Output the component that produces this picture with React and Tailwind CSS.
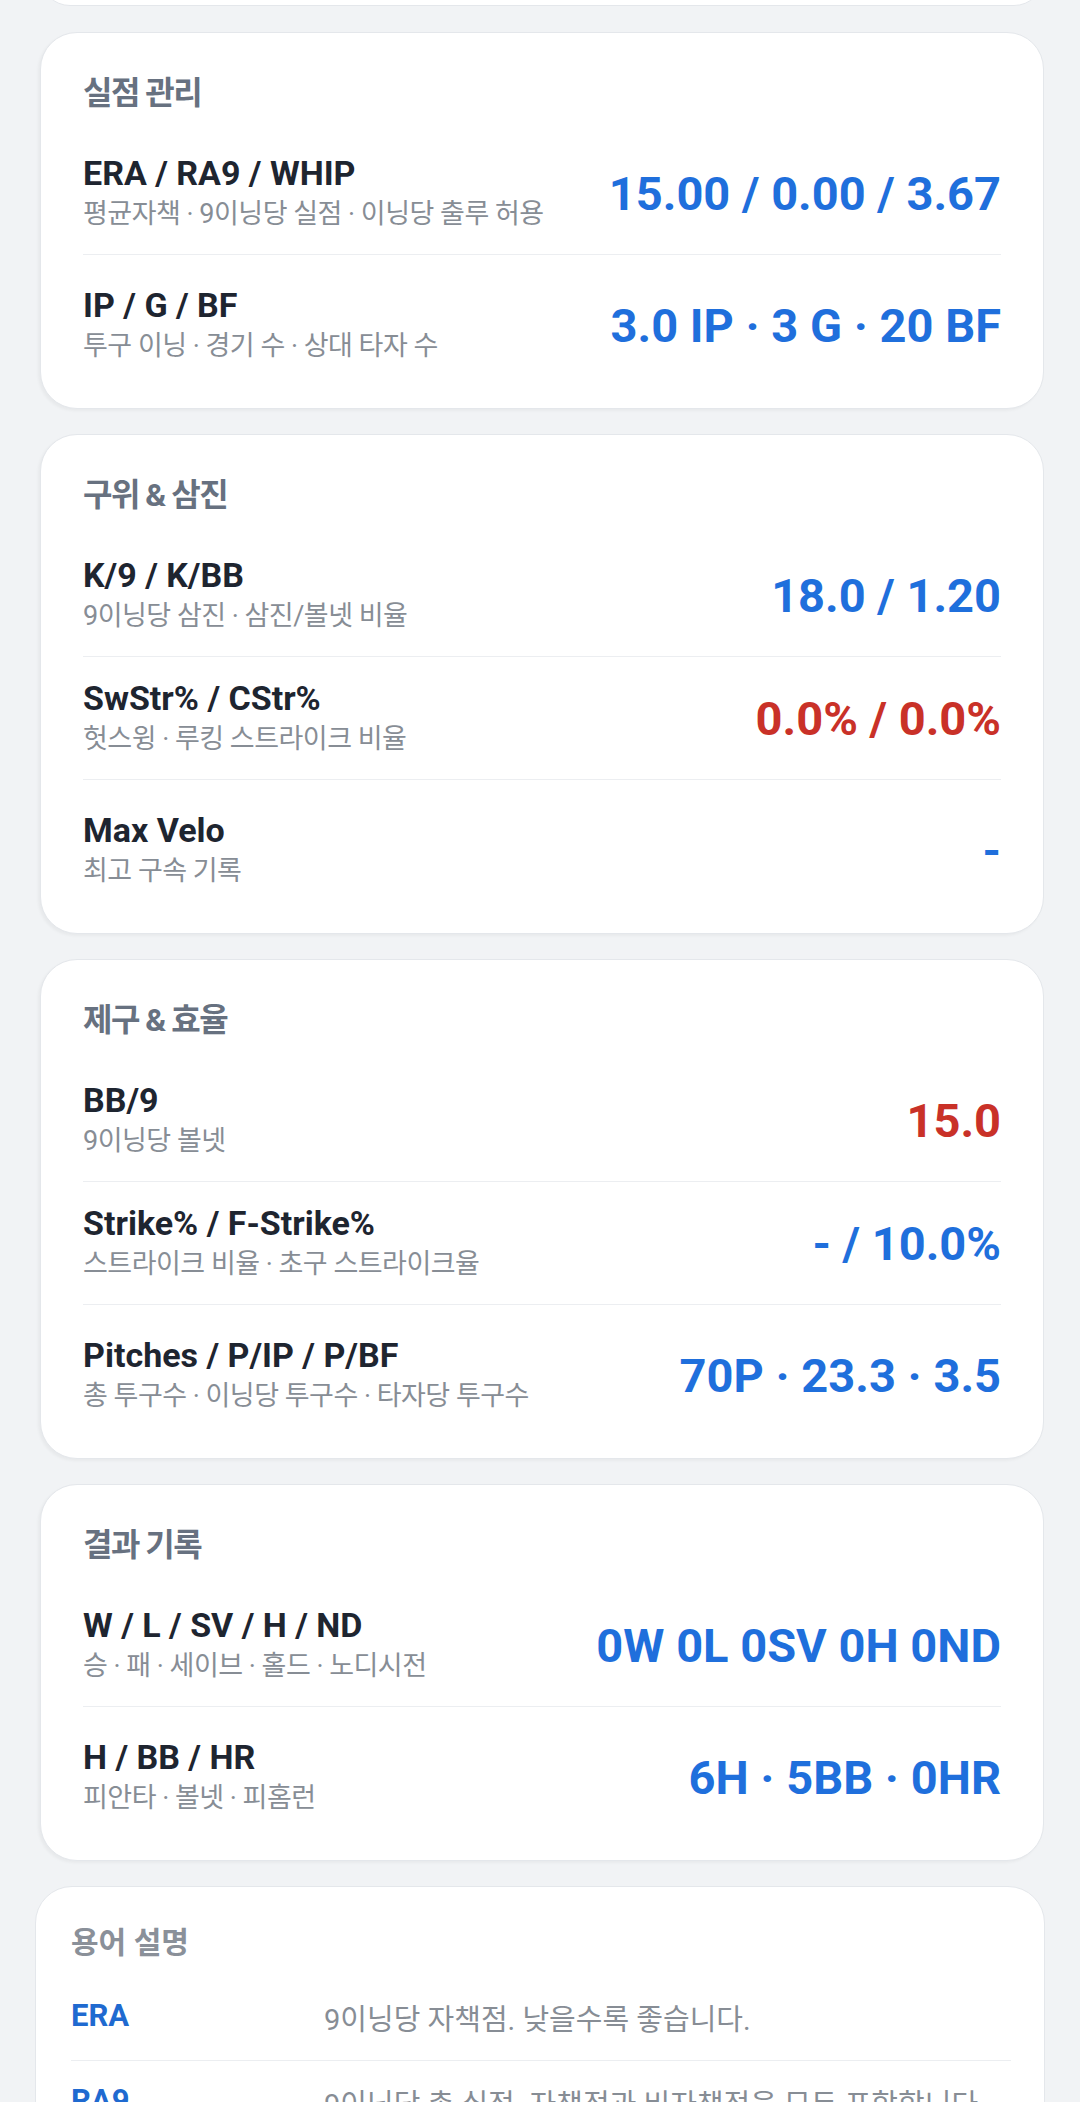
const FONT = "font-['Roboto','Noto_Sans_CJK_KR',sans-serif]"

const BLUE = 'text-[#1f6fdc]'
const RED = 'text-[#c93128]'

const sections = [
  {
    title: '실점 관리',
    rows: [
      { label: 'ERA / RA9 / WHIP', sub: '평균자책 · 9이닝당 실점 · 이닝당 출루 허용', value: '15.00 / 0.00 / 3.67', tone: 'blue' },
      { label: 'IP / G / BF', sub: '투구 이닝 · 경기 수 · 상대 타자 수', value: '3.0 IP · 3 G · 20 BF', tone: 'blue' },
    ],
  },
  {
    title: '구위 & 삼진',
    rows: [
      { label: 'K/9 / K/BB', sub: '9이닝당 삼진 · 삼진/볼넷 비율', value: '18.0 / 1.20', tone: 'blue' },
      { label: 'SwStr% / CStr%', sub: '헛스윙 · 루킹 스트라이크 비율', value: '0.0% / 0.0%', tone: 'red' },
      { label: 'Max Velo', sub: '최고 구속 기록', value: '-', tone: 'blue' },
    ],
  },
  {
    title: '제구 & 효율',
    rows: [
      { label: 'BB/9', sub: '9이닝당 볼넷', value: '15.0', tone: 'red' },
      { label: 'Strike% / F-Strike%', sub: '스트라이크 비율 · 초구 스트라이크율', value: '- / 10.0%', tone: 'blue' },
      { label: 'Pitches / P/IP / P/BF', sub: '총 투구수 · 이닝당 투구수 · 타자당 투구수', value: '70P · 23.3 · 3.5', tone: 'blue' },
    ],
  },
  {
    title: '결과 기록',
    rows: [
      { label: 'W / L / SV / H / ND', sub: '승 · 패 · 세이브 · 홀드 · 노디시전', value: '0W 0L 0SV 0H 0ND', tone: 'blue' },
      { label: 'H / BB / HR', sub: '피안타 · 볼넷 · 피홈런', value: '6H · 5BB · 0HR', tone: 'blue' },
    ],
  },
]

const glossary = [
  { term: 'ERA', desc: '9이닝당 자책점. 낮을수록 좋습니다.' },
  { term: 'RA9', desc: '9이닝당 총 실점. 자책점과 비자책점을 모두 포함합니다.' },
  { term: 'WHIP', desc: '이닝당 출루 허용. 안타와 볼넷의 합을 이닝으로 나눈 값입니다.' },
]

function StatRow({ row, last }) {
  return (
    <div className={`flex items-center justify-between gap-6 ${last ? 'pt-[29px]' : 'py-[20px] border-b border-[#eceef1]'}`}>
      <div className="min-w-0">
        <div className="text-[34px] leading-[42px] font-bold text-[#1e2530]">{row.label}</div>
        <div className="text-[27px] leading-[40px] tracking-[-0.5px] text-[#878d95]">{row.sub}</div>
      </div>
      <div className={`text-[47px] leading-[55px] font-bold whitespace-nowrap ${row.tone === 'red' ? RED : BLUE}`}>
        {row.value}
      </div>
    </div>
  )
}

function StatCard({ section }) {
  return (
    <div className="ml-[40px] w-[1004px] bg-white rounded-[37px] border border-[#e4e7eb] shadow-[-2px_2px_3px_rgba(0,0,0,0.04)] px-[42px] pt-[41px] pb-[42px]">
      <h2 className="text-[32px] leading-[38px] font-bold tracking-[-1.5px] text-[#677180] mb-[20px]">{section.title}</h2>
      {section.rows.map((row, i) => (
        <StatRow key={row.label} row={row} last={i === section.rows.length - 1} />
      ))}
    </div>
  )
}

export default function App() {
  return (
    <div className={`h-[2102px] overflow-hidden bg-[#f1f3f5] ${FONT}`}>
      {/* tail of the card above */}
      <div className="ml-[40px] w-[1004px] h-[60px] -mt-[54px] bg-white rounded-[37px] border border-[#e4e7eb]" />

      <div className="mt-[26px] flex flex-col gap-[25px]">
        {sections.map((s) => (
          <StatCard key={s.title} section={s} />
        ))}

        {/* Glossary */}
        <div className="ml-[35px] w-[1010px] bg-white rounded-[37px] border border-[#e4e7eb] pl-[35px] pr-[33px] pt-[38px] pb-[30px]">
          <h2 className="text-[30px] leading-[36px] font-bold text-[#8a9099] mb-[15px]">용어 설명</h2>
          {glossary.map((g, i) => (
            <div key={g.term} className={`flex items-start py-[20px] ${i < glossary.length - 1 ? 'border-b border-[#eceef1]' : ''}`}>
              <div className="w-[253px] shrink-0 text-[31px] leading-[40px] font-bold text-[#1f6ad0]">{g.term}</div>
              <div className="mt-[4px] text-[29px] leading-[40px] whitespace-nowrap text-[#878d95]">{g.desc}</div>
            </div>
          ))}
        </div>
      </div>
    </div>
  )
}
